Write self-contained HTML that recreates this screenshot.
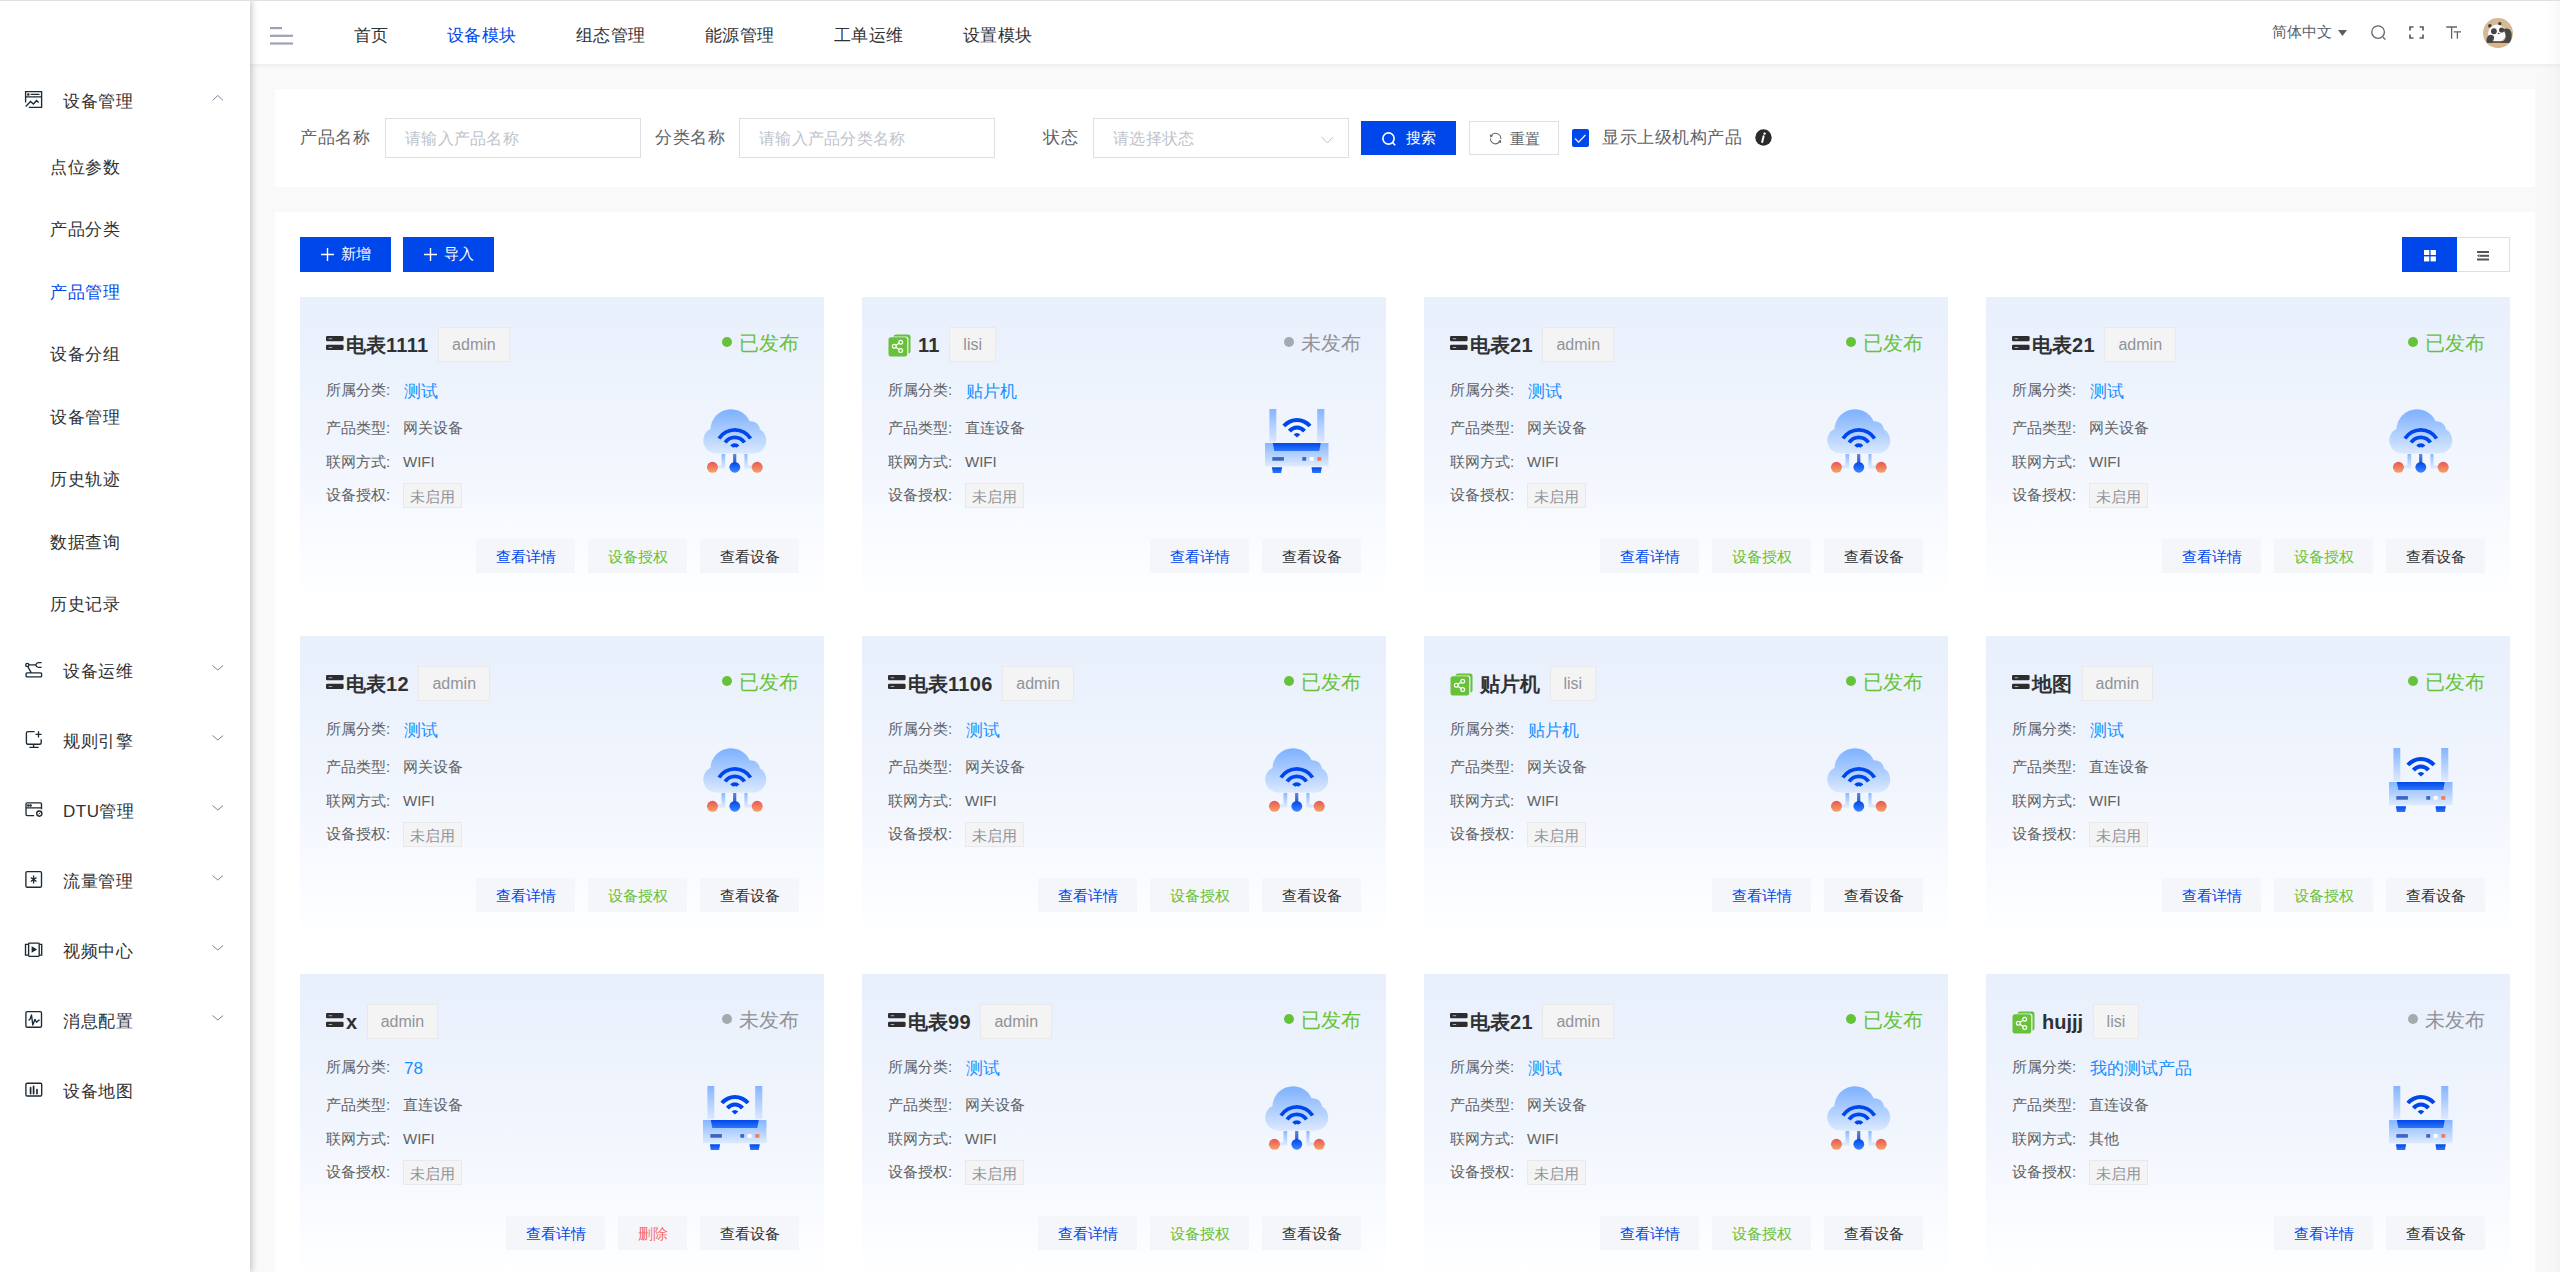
<!DOCTYPE html><html><head><meta charset="utf-8"><style>*{box-sizing:border-box}
html,body{margin:0;padding:0;width:2560px;height:1272px;overflow:hidden;background:#f9f9f9;font-family:"Liberation Sans",sans-serif;color:#303133}
div{white-space:nowrap}
.topline{position:absolute;left:0;top:0;width:2560px;height:1px;background:#dfe1de;z-index:20}
.side{position:absolute;left:0;top:0;width:250px;height:1272px;background:#fff;box-shadow:1px 0 7px rgba(20,30,50,.30);z-index:10}
.sic{position:absolute;left:25px}
.stop{position:absolute;left:63px;font-size:17px;letter-spacing:.5px;line-height:24px;color:#303133}
.ssub{position:absolute;left:50px;font-size:17px;letter-spacing:.5px;line-height:24px;color:#303133}
.ssub.act{color:#0047eb}
.chev{position:absolute;left:211.5px}
.header{position:absolute;left:250px;top:0;width:2310px;height:64px;background:#fff;box-shadow:0 1px 5px rgba(0,21,41,.07);z-index:5}
.nav{position:absolute;top:24px;font-size:17px;letter-spacing:.5px;line-height:24px;color:#303133}
.nav.act{color:#0047eb}
.panel{position:absolute;left:275px;width:2260px;background:#fff}
.lbl{position:absolute;top:126px;font-size:17px;letter-spacing:.5px;line-height:24px;color:#606266}
.inp{position:absolute;top:118px;width:256px;height:40px;border:1px solid #dcdfe6;background:#fff}
.ph{position:absolute;left:19px;top:8px;font-size:16px;letter-spacing:.25px;line-height:24px;color:#c0c4cc}
.btnp{position:absolute;background:#0047eb;color:#fff;font-size:15px;line-height:24px}
.card{position:absolute;width:524px;height:301px;background:linear-gradient(180deg,#e8f0fc 0%,#f1f5fd 50%,#fafcff 85%,#ffffff 100%)}
.ctitle{position:absolute;left:26px;top:30px;height:36px}
.cicon{display:inline-block;vertical-align:top}
.cicon.bars{margin-top:9px;width:20px}
.cicon.share{margin-top:7px;width:30px}
.tname{display:inline-block;vertical-align:top;font-size:20px;font-weight:bold;line-height:36px;color:#303133}
.ctag{display:inline-block;vertical-align:top;margin-left:9.5px;height:35px;padding:0 13px;background:#f4f4f5;border:1px solid #e9e9eb;color:#909399;font-size:16px;line-height:33px}
.status{position:absolute;right:25px;top:34px;height:24px}
.dot{position:absolute;left:-17px;top:6px;width:10px;height:10px;border-radius:50%}
.stt{font-size:20px;line-height:24px}
.lab{position:absolute;left:26px;font-size:15px;line-height:24px;color:#606266}
.val{position:absolute;left:104px;font-size:15px;line-height:24px;color:#606266}
.cat{position:absolute;left:104px;font-size:17px;line-height:24px;color:#1890ff}
.tag2{position:absolute;left:103px;top:186px;height:25px;padding:0 6px;background:#f4f4f5;border:1px solid #e9e9eb;color:#909399;font-size:15px;line-height:25px}
.cimg{position:absolute;left:403px;top:112px;width:64px;height:64px}
.cbtns{position:absolute;right:25px;top:242px;display:flex;gap:13px}
.cbtn{width:99px;height:34px;background:#f5f6fa;font-size:15px;line-height:35px;text-align:center}
</style></head><body>
<div class="topline"></div>
<div class="side"><svg style="position:absolute;left:20px;top:85px" width="30" height="30" viewBox="0 0 30 30" fill="none" stroke="#1c2a35" stroke-width="1.35"><path d="M5.6 17.5 V6.6 H21.6 V22.3 H8.8 M5.6 11.8 H21.6 M10.6 9.4 H19.5"/><circle cx="8.3" cy="9.4" r="0.6" fill="#1c2a35"/><path d="M5.7 21.5 L10.5 16.5 L13.4 19 L16.5 15.5 L18.6 17.6"/></svg><div class="stop" style="top:90px">设备管理</div><svg style="position:absolute;left:212px;top:94.5px" width="12" height="6" viewBox="0 0 12 6"><path d="M0.5 5.5 L5.8 0.5 L11.1 5.5" fill="none" stroke="#7d8092" stroke-width="1"/></svg><div class="ssub" style="top:156px">点位参数</div><div class="ssub" style="top:218px">产品分类</div><div class="ssub act" style="top:281px">产品管理</div><div class="ssub" style="top:343px">设备分组</div><div class="ssub" style="top:406px">设备管理</div><div class="ssub" style="top:468px">历史轨迹</div><div class="ssub" style="top:531px">数据查询</div><div class="ssub" style="top:593px">历史记录</div><svg style="position:absolute;left:20px;top:655px" width="30" height="30" viewBox="0 0 30 30" fill="none" stroke="#1c2a35" stroke-width="1.35"><circle cx="7.3" cy="9.9" r="1.6"/><path d="M8.9 9.9 H15.7 M15.7 9.9 Q16.6 7.6 18.4 7.6 H21.6 M15.7 9.9 Q16.6 12.3 18.4 12.3 H21.6 M7.8 11.5 L11.3 17.8"/><rect x="6.1" y="17.8" width="15.5" height="4" rx="0.9"/></svg><div class="stop" style="top:660px">设备运维</div><svg style="position:absolute;left:212px;top:664.5px" width="12" height="6" viewBox="0 0 12 6"><path d="M0.5 0.5 L5.8 5 L11.1 0.5" fill="none" stroke="#7d8092" stroke-width="1"/></svg><svg style="position:absolute;left:20px;top:725px" width="30" height="30" viewBox="0 0 30 30" fill="none" stroke="#1c2a35" stroke-width="1.35"><path d="M14.6 6.6 H7.9 Q6.4 6.6 6.4 8.1 V17.7 Q6.4 19.2 7.9 19.2 H19.7 Q21.2 19.2 21.2 17.7 V14.2 M13.6 19.2 V22.4 M9.4 22.4 H18.6 M18.5 6.2 V12.6 M15.4 9.4 H21.6"/></svg><div class="stop" style="top:730px">规则引擎</div><svg style="position:absolute;left:212px;top:734.5px" width="12" height="6" viewBox="0 0 12 6"><path d="M0.5 0.5 L5.8 5 L11.1 0.5" fill="none" stroke="#7d8092" stroke-width="1"/></svg><svg style="position:absolute;left:20px;top:795px" width="30" height="30" viewBox="0 0 30 30" fill="none" stroke="#1c2a35" stroke-width="1.35"><path d="M14.2 20.6 H7.3 Q6 20.6 6 19.3 V9.1 Q6 7.8 7.3 7.8 H20.2 Q21.5 7.8 21.5 9.1 V14.2 M6 12.9 H21.5"/><circle cx="8.3" cy="10.4" r="0.6" fill="#1c2a35"/><circle cx="10.6" cy="10.4" r="0.6" fill="#1c2a35"/><circle cx="19.3" cy="18.6" r="2.6"/><path d="M18.4 19.5 L20.2 17.7" stroke-width="1"/></svg><div class="stop" style="top:800px">DTU管理</div><svg style="position:absolute;left:212px;top:804.5px" width="12" height="6" viewBox="0 0 12 6"><path d="M0.5 0.5 L5.8 5 L11.1 0.5" fill="none" stroke="#7d8092" stroke-width="1"/></svg><svg style="position:absolute;left:20px;top:865px" width="30" height="30" viewBox="0 0 30 30" fill="none" stroke="#1c2a35" stroke-width="1.35"><rect x="5.9" y="6.6" width="15.6" height="15.6" rx="1.3"/><path d="M13.6 10.4 V18.6 M10.8 12.5 L16.5 16.5 M16.5 12.5 L10.8 16.5"/></svg><div class="stop" style="top:870px">流量管理</div><svg style="position:absolute;left:212px;top:874.5px" width="12" height="6" viewBox="0 0 12 6"><path d="M0.5 0.5 L5.8 5 L11.1 0.5" fill="none" stroke="#7d8092" stroke-width="1"/></svg><svg style="position:absolute;left:20px;top:935px" width="30" height="30" viewBox="0 0 30 30" fill="none" stroke="#1c2a35" stroke-width="1.35"><rect x="8.6" y="8.1" width="10.6" height="13.3" rx="0.8"/><path d="M8.6 9.4 H5.5 V20.1 H8.6 M19.2 9.4 H21.7 V20.1 H19.2"/><path d="M12.3 12.4 L15.8 14.45 L12.3 16.5 Z" fill="#1c2a35"/></svg><div class="stop" style="top:940px">视频中心</div><svg style="position:absolute;left:212px;top:944.5px" width="12" height="6" viewBox="0 0 12 6"><path d="M0.5 0.5 L5.8 5 L11.1 0.5" fill="none" stroke="#7d8092" stroke-width="1"/></svg><svg style="position:absolute;left:20px;top:1005px" width="30" height="30" viewBox="0 0 30 30" fill="none" stroke="#1c2a35" stroke-width="1.35"><rect x="5.9" y="6.6" width="15.6" height="15.6" rx="1.3"/><path d="M8.5 15.2 Q9.9 15 10.4 13.2 L11.5 10 L12.8 20 L14.9 14.4 L16.5 17.2 L18.9 15.1 H19.7" stroke-linejoin="round"/></svg><div class="stop" style="top:1010px">消息配置</div><svg style="position:absolute;left:212px;top:1014.5px" width="12" height="6" viewBox="0 0 12 6"><path d="M0.5 0.5 L5.8 5 L11.1 0.5" fill="none" stroke="#7d8092" stroke-width="1"/></svg><svg style="position:absolute;left:20px;top:1075px" width="30" height="30" viewBox="0 0 30 30" fill="none" stroke="#1c2a35" stroke-width="1.35"><rect x="5.9" y="8.2" width="15.8" height="12.8" rx="1.2"/><path d="M10.6 12.7 V18.6 M13.6 11.3 V18.6 M17 14.6 V18.6" stroke-width="1.7" stroke-linecap="round"/></svg><div class="stop" style="top:1080px">设备地图</div></div>
<div class="header">
<svg style="position:absolute;left:20px;top:27px" width="24" height="18" viewBox="0 0 24 18"><rect x="0" y="0" width="12" height="2.2" fill="#9ea1b7"/><rect x="0" y="7.7" width="23" height="2.2" fill="#9ea1b7"/><rect x="0" y="15.4" width="23" height="2.2" fill="#9ea1b7"/></svg>
<div class="nav" style="left:103.5px">首页</div>
<div class="nav act" style="left:196.5px">设备模块</div>
<div class="nav" style="left:325.5px">组态管理</div>
<div class="nav" style="left:454.5px">能源管理</div>
<div class="nav" style="left:583.5px">工单运维</div>
<div class="nav" style="left:712.5px">设置模块</div>
<div style="position:absolute;left:2022px;top:20px;font-size:15px;line-height:24px;color:#5a5e66">简体中文</div>
<svg style="position:absolute;left:2088px;top:30px" width="9" height="6" viewBox="0 0 9 6"><path d="M0 0 H9 L4.5 6 Z" fill="#5a5e66"/></svg>
<svg style="position:absolute;left:2121px;top:25px" width="17" height="17" viewBox="0 0 17 17"><circle cx="7.1" cy="7.1" r="6.3" fill="none" stroke="#5f6270" stroke-width="1.3"/><path d="M12 12.2 L14.4 14.6" stroke="#5f6270" stroke-width="1.3"/></svg>
<svg style="position:absolute;left:2159px;top:26px" width="15" height="13" viewBox="0 0 15 13" fill="none" stroke="#5a5e66" stroke-width="1.7"><path d="M1 4.5 V1 H4.5 M10.5 1 H14 V4.5 M14 8.5 V12 H10.5 M4.5 12 H1 V8.5"/></svg>
<svg style="position:absolute;left:2196px;top:26px" width="16" height="13" viewBox="0 0 16 13" fill="none" stroke="#5f6270" stroke-width="1.3"><path d="M0.2 1 H11 M5.6 1 V12.7 M7.8 5.8 H15 M11.4 5.8 V12.7"/></svg>
<div style="position:absolute;left:2233px;top:18px;width:30px;height:30px"><svg width="30" height="30" viewBox="0 0 30 30"><defs><clipPath id="pc"><circle cx="15" cy="15" r="15"/></clipPath></defs>
<g clip-path="url(#pc)"><rect width="30" height="30" fill="#d5ba96"/><rect y="24.6" width="30" height="6" fill="#ddb688"/>
<circle cx="6.9" cy="7.9" r="1.8" fill="#3c3c3c"/><circle cx="16.8" cy="5.7" r="1.7" fill="#3c3c3c"/>
<circle cx="13.9" cy="15.4" r="8.8" fill="#fdfdfd"/>
<ellipse cx="10.9" cy="13.3" rx="2.9" ry="3" fill="#434343"/><ellipse cx="18.6" cy="12" rx="2.6" ry="2.6" fill="#434343"/>
<ellipse cx="15.7" cy="15.4" rx="1" ry="0.55" fill="#333"/>
<rect x="4" y="23.2" width="23.5" height="1.6" fill="#474747"/>
<path d="M20.6 11.6 C23 9.6 27.6 10.4 28.5 15 C29.1 18.5 28.2 22 27.2 24.8 L17 24.8 C21 23.2 23.2 20.5 22.7 17.4 C22.4 15 20.9 13.6 20.6 11.6 Z" fill="#474747"/>
<path d="M3.5 24.8 C3 20 5 16.9 8 16.8 C10.6 16.7 11.6 19 10.9 21 C10.4 22.6 9.6 23.8 9 24.8 Z" fill="#474747"/>
</g></svg></div>
</div>
<div class="panel" style="top:89px;height:98px"></div>
<div class="lbl" style="left:300px">产品名称</div>
<div class="inp" style="left:385px"><div class="ph">请输入产品名称</div></div>
<div class="lbl" style="left:655px">分类名称</div>
<div class="inp" style="left:739px"><div class="ph">请输入产品分类名称</div></div>
<div class="lbl" style="left:1043px">状态</div>
<div class="inp" style="left:1093px"><div class="ph">请选择状态</div><svg style="position:absolute;left:227px;top:17px" width="13" height="8" viewBox="0 0 13 8"><path d="M0.5 0.8 L6.3 7 L12.1 0.8" fill="none" stroke="#c0c4cc" stroke-width="1"/></svg></div>
<div class="btnp" style="left:1361px;top:121px;width:95px;height:34px"><svg style="position:absolute;left:21px;top:11px" width="14" height="14" viewBox="0 0 14 14"><circle cx="6.5" cy="6.5" r="5.6" fill="none" stroke="#fff" stroke-width="1.6"/><path d="M10.6 10.6 L13.2 13.2" stroke="#fff" stroke-width="1.6"/></svg><span style="position:absolute;left:45px;top:5px">搜索</span></div>
<div style="position:absolute;left:1469px;top:121px;width:90px;height:34px;border:1px solid #dcdfe6;background:#fff;font-size:15px;line-height:24px;color:#606266"><svg style="position:absolute;left:19px;top:10px" width="13" height="13" viewBox="0 0 14 14"><path d="M2.25 4.3 A5.6 5.6 0 0 1 12.68 7.6 M1.5 7.1 A5.6 5.6 0 0 0 11.39 10.7" fill="none" stroke="#606266" stroke-width="1.1"/><path d="M0.9 2.4 L4.4 4.4 L1.4 6 Z M13.1 12 L9.7 9.9 L12.7 8.4 Z" fill="#606266"/></svg><span style="position:absolute;left:40px;top:5px">重置</span></div>
<div style="position:absolute;left:1572px;top:129px;width:17px;height:18px;border-radius:2px;background:#0047eb"><svg width="17" height="18" viewBox="0 0 17 18"><path d="M3.1 9.4 L6.6 13.2 L13.4 5.9" fill="none" stroke="#dfe6ff" stroke-width="1.5"/></svg></div>
<div style="position:absolute;left:1602px;top:126px;font-size:17px;letter-spacing:.5px;line-height:24px;color:#606266">显示上级机构产品</div>
<svg style="position:absolute;left:1755px;top:129px" width="17" height="17" viewBox="0 0 17 17"><circle cx="8.5" cy="8.5" r="8.2" fill="#2b2b2b"/><circle cx="9.6" cy="4.6" r="1.2" fill="#fff"/><path d="M8.6 7.2 L7.2 13" stroke="#fff" stroke-width="2" stroke-linecap="round"/></svg>
<div class="panel" style="top:212px;height:1100px"></div>
<div class="btnp" style="left:300px;top:237px;width:91px;height:35px"><svg width="13" height="13" viewBox="0 0 13 13" style="position:absolute;left:21px;top:10.8px"><path d="M6.5 0 V13 M0 6.5 H13" stroke="#fff" stroke-width="1.4"/></svg><span style="position:absolute;left:41px;top:5px">新增</span></div>
<div class="btnp" style="left:403px;top:237px;width:91px;height:35px"><svg width="13" height="13" viewBox="0 0 13 13" style="position:absolute;left:21px;top:10.8px"><path d="M6.5 0 V13 M0 6.5 H13" stroke="#fff" stroke-width="1.4"/></svg><span style="position:absolute;left:41px;top:5px">导入</span></div>
<div style="position:absolute;left:2402px;top:237px;width:55px;height:35px;background:#0047eb"><svg style="position:absolute;left:21.5px;top:12.7px" width="13" height="12" viewBox="0 0 13 12" fill="#fff"><rect x="0" y="0" width="5.3" height="5" /><rect x="6.6" y="0" width="5.3" height="5"/><rect x="0" y="6.4" width="5.3" height="5"/><rect x="6.6" y="6.4" width="5.3" height="5"/></svg></div>
<div style="position:absolute;left:2457px;top:237px;width:53px;height:35px;border:1px solid #dcdfe6;border-left:none;background:#fff"><svg style="position:absolute;left:20px;top:13px" width="12" height="10" viewBox="0 0 12 10" fill="#555"><rect x="0" y="0" width="12" height="2"/><rect x="3" y="3.8" width="9" height="2"/><path d="M0 4.8 L2.5 3 V6.6 Z"/><rect x="0" y="7.5" width="12" height="2"/></svg></div>
<div class="card" style="left:300px;top:297px">
<div class="ctitle"><span class="cicon bars"><svg width="18" height="14" viewBox="0 0 18 14"><rect x="0" y="0" width="17.6" height="5.2" rx="1.3" fill="#2d2d2f"/><rect x="0" y="8.8" width="17.6" height="5.2" rx="1.3" fill="#2d2d2f"/><rect x="2.7" y="2.3" width="3.5" height="0.9" fill="#bbb"/><rect x="2.7" y="11.1" width="3.5" height="0.9" fill="#bbb"/></svg></span><span class="tname">电表<span style="letter-spacing:.35px">1111</span></span><span class="ctag">admin</span></div>
<div class="status"><span class="dot" style="background:#67c23a"></span><span class="stt" style="color:#67c23a">已发布</span></div>
<div class="lab" style="top:81px">所属分类:</div><div class="cat" style="top:83px">测试</div>
<div class="lab" style="top:119px">产品类型:</div><div class="val" style="top:119px;left:103px">网关设备</div>
<div class="lab" style="top:153px">联网方式:</div><div class="val" style="top:153px;left:103px">WIFI</div>
<div class="lab" style="top:186px">设备授权:</div><div class="tag2">未启用</div>
<div class="cimg"><svg width="64" height="64" viewBox="0 0 64 64"><defs>
<linearGradient id="cg0" gradientUnits="userSpaceOnUse" x1="0" y1="0" x2="0" y2="45"><stop offset="0" stop-color="#7cb0ff"/><stop offset="1" stop-color="#dbe9fe"/></linearGradient>
<linearGradient id="og0" x1="0" y1="0" x2="0" y2="1"><stop offset="0" stop-color="#ea5455"/><stop offset="1" stop-color="#f5a466"/></linearGradient>
<linearGradient id="bg0" x1="0" y1="0" x2="0" y2="1"><stop offset="0" stop-color="#0047eb"/><stop offset="1" stop-color="#3d88ff"/></linearGradient>
<linearGradient id="lg0" gradientUnits="userSpaceOnUse" x1="0" y1="45" x2="0" y2="60"><stop offset="0" stop-color="#8ab8ff"/><stop offset="1" stop-color="#e4efff"/></linearGradient>
<linearGradient id="dg0" gradientUnits="userSpaceOnUse" x1="0" y1="45" x2="0" y2="54"><stop offset="0" stop-color="#5f86d6"/><stop offset="1" stop-color="#2f5fc4"/></linearGradient>
</defs>
<g fill="url(#cg0)"><circle cx="28" cy="20.9" r="20.6"/><circle cx="48" cy="21" r="8.8"/><circle cx="13.3" cy="31.5" r="13"/><circle cx="50.2" cy="31.5" r="13"/><rect x="13.3" y="20" width="37" height="24.5"/></g>
<path d="M14.44 28.53 A20.7 20.7 0 0 1 49.16 28.53 L46.06 30.54 A17 17 0 0 0 17.54 30.54 ZM20.56 32.50 A13.4 13.4 0 0 1 43.04 32.50 L39.85 34.57 A9.6 9.6 0 0 0 23.75 34.57 ZM27.21 36.59 A5.6 5.6 0 0 1 36.39 36.59 L33.27 38.77 A1.8 1.8 0 0 0 30.33 38.77 Z" fill="#0047eb"/>
<path d="M18.5 45 H22.2 V59.7 H14.5 V56.6 H18.5 Z" fill="url(#lg0)"/>
<path d="M41.4 45 H44.5 V56.6 H49 V59.7 H41.4 Z" fill="url(#lg0)"/>
<rect x="30.1" y="45" width="3.2" height="9" fill="url(#dg0)"/>
<circle cx="9.45" cy="58.3" r="5.5" fill="url(#og0)"/><circle cx="54.2" cy="58.3" r="5.5" fill="url(#og0)"/>
<circle cx="31.8" cy="58.3" r="5.4" fill="url(#bg0)"/>
</svg></div>
<div class="cbtns"><div class="cbtn" style="color:#0047eb">查看详情</div><div class="cbtn" style="color:#67c23a">设备授权</div><div class="cbtn" style="color:#303133">查看设备</div></div>
</div><div class="card" style="left:862px;top:297px">
<div class="ctitle"><span class="cicon share"><svg width="23" height="23" viewBox="0 0 23 23"><rect x="5.5" y="0.5" width="17" height="19" rx="2.5" fill="#67c23a"/><rect x="4" y="2.5" width="16.5" height="19" rx="2.5" fill="#e9effb"/><rect x="0.5" y="3.2" width="18.7" height="19.3" rx="2.5" fill="#67c23a"/>
<g fill="none" stroke="#fff" stroke-width="1.2"><circle cx="12.7" cy="8.2" r="1.9"/><circle cx="6.3" cy="12.2" r="1.9"/><circle cx="12.7" cy="16.6" r="1.9"/><path d="M11.1 9.2 L7.9 11.2 M7.9 13.2 L11.1 15.6"/></g></svg></span><span class="tname"><span style="letter-spacing:.35px">11</span></span><span class="ctag">lisi</span></div>
<div class="status"><span class="dot" style="background:#a6a9ad"></span><span class="stt" style="color:#909399">未发布</span></div>
<div class="lab" style="top:81px">所属分类:</div><div class="cat" style="top:83px">贴片机</div>
<div class="lab" style="top:119px">产品类型:</div><div class="val" style="top:119px;left:103px">直连设备</div>
<div class="lab" style="top:153px">联网方式:</div><div class="val" style="top:153px;left:103px">WIFI</div>
<div class="lab" style="top:186px">设备授权:</div><div class="tag2">未启用</div>
<div class="cimg"><svg width="64" height="64" viewBox="0 0 64 64"><defs>
<linearGradient id="ra1" x1="0" y1="0" x2="0" y2="1"><stop offset="0" stop-color="#84b5ff"/><stop offset="1" stop-color="#dde9ff"/></linearGradient>
<linearGradient id="rb1" x1="0" y1="0" x2="0" y2="1"><stop offset="0" stop-color="#86b6ff"/><stop offset="1" stop-color="#deebff"/></linearGradient>
<linearGradient id="rc1" x1="0" y1="0" x2="0" y2="1"><stop offset="0" stop-color="#0047eb"/><stop offset="1" stop-color="#2f78f7"/></linearGradient>
</defs>
<rect x="4.4" y="0" width="6.9" height="33" fill="url(#ra1)"/><rect x="52.2" y="0" width="7.1" height="33" fill="url(#ra1)"/>
<path d="M17.38 15.74 A19.3 19.3 0 0 1 46.52 15.74 L43.50 18.36 A15.3 15.3 0 0 0 20.40 18.36 ZM22.91 20.82 A11.8 11.8 0 0 1 40.99 20.82 L37.93 23.39 A7.8 7.8 0 0 0 25.97 23.39 ZM28.58 25.57 A4.4 4.4 0 0 1 35.32 25.57 L31.95 28.40 Z" fill="#0047eb"/>
<rect x="0" y="34" width="63.5" height="23.3" fill="url(#rb1)"/>
<path d="M7.8 34 H55.7 L54.3 42.1 H9.3 Z" fill="url(#rc1)"/>
<rect x="7.3" y="48.1" width="11.6" height="3.6" fill="#3d64c0"/>
<rect x="37.3" y="48.1" width="3.9" height="3.6" fill="#3d64c0"/>
<rect x="44.7" y="48.1" width="3.9" height="3.6" fill="#ffffff"/>
<rect x="52.3" y="48.1" width="4" height="3.6" fill="#f07b55"/>
<path d="M6.9 58.2 H17.1 L16.1 64 H7.8 Z" fill="url(#rc1)"/>
<path d="M46.5 58.2 H56.8 L55.8 64 H47.3 Z" fill="url(#rc1)"/>
</svg></div>
<div class="cbtns"><div class="cbtn" style="color:#0047eb">查看详情</div><div class="cbtn" style="color:#303133">查看设备</div></div>
</div><div class="card" style="left:1424px;top:297px">
<div class="ctitle"><span class="cicon bars"><svg width="18" height="14" viewBox="0 0 18 14"><rect x="0" y="0" width="17.6" height="5.2" rx="1.3" fill="#2d2d2f"/><rect x="0" y="8.8" width="17.6" height="5.2" rx="1.3" fill="#2d2d2f"/><rect x="2.7" y="2.3" width="3.5" height="0.9" fill="#bbb"/><rect x="2.7" y="11.1" width="3.5" height="0.9" fill="#bbb"/></svg></span><span class="tname">电表<span style="letter-spacing:.35px">21</span></span><span class="ctag">admin</span></div>
<div class="status"><span class="dot" style="background:#67c23a"></span><span class="stt" style="color:#67c23a">已发布</span></div>
<div class="lab" style="top:81px">所属分类:</div><div class="cat" style="top:83px">测试</div>
<div class="lab" style="top:119px">产品类型:</div><div class="val" style="top:119px;left:103px">网关设备</div>
<div class="lab" style="top:153px">联网方式:</div><div class="val" style="top:153px;left:103px">WIFI</div>
<div class="lab" style="top:186px">设备授权:</div><div class="tag2">未启用</div>
<div class="cimg"><svg width="64" height="64" viewBox="0 0 64 64"><defs>
<linearGradient id="cg2" gradientUnits="userSpaceOnUse" x1="0" y1="0" x2="0" y2="45"><stop offset="0" stop-color="#7cb0ff"/><stop offset="1" stop-color="#dbe9fe"/></linearGradient>
<linearGradient id="og2" x1="0" y1="0" x2="0" y2="1"><stop offset="0" stop-color="#ea5455"/><stop offset="1" stop-color="#f5a466"/></linearGradient>
<linearGradient id="bg2" x1="0" y1="0" x2="0" y2="1"><stop offset="0" stop-color="#0047eb"/><stop offset="1" stop-color="#3d88ff"/></linearGradient>
<linearGradient id="lg2" gradientUnits="userSpaceOnUse" x1="0" y1="45" x2="0" y2="60"><stop offset="0" stop-color="#8ab8ff"/><stop offset="1" stop-color="#e4efff"/></linearGradient>
<linearGradient id="dg2" gradientUnits="userSpaceOnUse" x1="0" y1="45" x2="0" y2="54"><stop offset="0" stop-color="#5f86d6"/><stop offset="1" stop-color="#2f5fc4"/></linearGradient>
</defs>
<g fill="url(#cg2)"><circle cx="28" cy="20.9" r="20.6"/><circle cx="48" cy="21" r="8.8"/><circle cx="13.3" cy="31.5" r="13"/><circle cx="50.2" cy="31.5" r="13"/><rect x="13.3" y="20" width="37" height="24.5"/></g>
<path d="M14.44 28.53 A20.7 20.7 0 0 1 49.16 28.53 L46.06 30.54 A17 17 0 0 0 17.54 30.54 ZM20.56 32.50 A13.4 13.4 0 0 1 43.04 32.50 L39.85 34.57 A9.6 9.6 0 0 0 23.75 34.57 ZM27.21 36.59 A5.6 5.6 0 0 1 36.39 36.59 L33.27 38.77 A1.8 1.8 0 0 0 30.33 38.77 Z" fill="#0047eb"/>
<path d="M18.5 45 H22.2 V59.7 H14.5 V56.6 H18.5 Z" fill="url(#lg2)"/>
<path d="M41.4 45 H44.5 V56.6 H49 V59.7 H41.4 Z" fill="url(#lg2)"/>
<rect x="30.1" y="45" width="3.2" height="9" fill="url(#dg2)"/>
<circle cx="9.45" cy="58.3" r="5.5" fill="url(#og2)"/><circle cx="54.2" cy="58.3" r="5.5" fill="url(#og2)"/>
<circle cx="31.8" cy="58.3" r="5.4" fill="url(#bg2)"/>
</svg></div>
<div class="cbtns"><div class="cbtn" style="color:#0047eb">查看详情</div><div class="cbtn" style="color:#67c23a">设备授权</div><div class="cbtn" style="color:#303133">查看设备</div></div>
</div><div class="card" style="left:1986px;top:297px">
<div class="ctitle"><span class="cicon bars"><svg width="18" height="14" viewBox="0 0 18 14"><rect x="0" y="0" width="17.6" height="5.2" rx="1.3" fill="#2d2d2f"/><rect x="0" y="8.8" width="17.6" height="5.2" rx="1.3" fill="#2d2d2f"/><rect x="2.7" y="2.3" width="3.5" height="0.9" fill="#bbb"/><rect x="2.7" y="11.1" width="3.5" height="0.9" fill="#bbb"/></svg></span><span class="tname">电表<span style="letter-spacing:.35px">21</span></span><span class="ctag">admin</span></div>
<div class="status"><span class="dot" style="background:#67c23a"></span><span class="stt" style="color:#67c23a">已发布</span></div>
<div class="lab" style="top:81px">所属分类:</div><div class="cat" style="top:83px">测试</div>
<div class="lab" style="top:119px">产品类型:</div><div class="val" style="top:119px;left:103px">网关设备</div>
<div class="lab" style="top:153px">联网方式:</div><div class="val" style="top:153px;left:103px">WIFI</div>
<div class="lab" style="top:186px">设备授权:</div><div class="tag2">未启用</div>
<div class="cimg"><svg width="64" height="64" viewBox="0 0 64 64"><defs>
<linearGradient id="cg3" gradientUnits="userSpaceOnUse" x1="0" y1="0" x2="0" y2="45"><stop offset="0" stop-color="#7cb0ff"/><stop offset="1" stop-color="#dbe9fe"/></linearGradient>
<linearGradient id="og3" x1="0" y1="0" x2="0" y2="1"><stop offset="0" stop-color="#ea5455"/><stop offset="1" stop-color="#f5a466"/></linearGradient>
<linearGradient id="bg3" x1="0" y1="0" x2="0" y2="1"><stop offset="0" stop-color="#0047eb"/><stop offset="1" stop-color="#3d88ff"/></linearGradient>
<linearGradient id="lg3" gradientUnits="userSpaceOnUse" x1="0" y1="45" x2="0" y2="60"><stop offset="0" stop-color="#8ab8ff"/><stop offset="1" stop-color="#e4efff"/></linearGradient>
<linearGradient id="dg3" gradientUnits="userSpaceOnUse" x1="0" y1="45" x2="0" y2="54"><stop offset="0" stop-color="#5f86d6"/><stop offset="1" stop-color="#2f5fc4"/></linearGradient>
</defs>
<g fill="url(#cg3)"><circle cx="28" cy="20.9" r="20.6"/><circle cx="48" cy="21" r="8.8"/><circle cx="13.3" cy="31.5" r="13"/><circle cx="50.2" cy="31.5" r="13"/><rect x="13.3" y="20" width="37" height="24.5"/></g>
<path d="M14.44 28.53 A20.7 20.7 0 0 1 49.16 28.53 L46.06 30.54 A17 17 0 0 0 17.54 30.54 ZM20.56 32.50 A13.4 13.4 0 0 1 43.04 32.50 L39.85 34.57 A9.6 9.6 0 0 0 23.75 34.57 ZM27.21 36.59 A5.6 5.6 0 0 1 36.39 36.59 L33.27 38.77 A1.8 1.8 0 0 0 30.33 38.77 Z" fill="#0047eb"/>
<path d="M18.5 45 H22.2 V59.7 H14.5 V56.6 H18.5 Z" fill="url(#lg3)"/>
<path d="M41.4 45 H44.5 V56.6 H49 V59.7 H41.4 Z" fill="url(#lg3)"/>
<rect x="30.1" y="45" width="3.2" height="9" fill="url(#dg3)"/>
<circle cx="9.45" cy="58.3" r="5.5" fill="url(#og3)"/><circle cx="54.2" cy="58.3" r="5.5" fill="url(#og3)"/>
<circle cx="31.8" cy="58.3" r="5.4" fill="url(#bg3)"/>
</svg></div>
<div class="cbtns"><div class="cbtn" style="color:#0047eb">查看详情</div><div class="cbtn" style="color:#67c23a">设备授权</div><div class="cbtn" style="color:#303133">查看设备</div></div>
</div><div class="card" style="left:300px;top:635.5px">
<div class="ctitle"><span class="cicon bars"><svg width="18" height="14" viewBox="0 0 18 14"><rect x="0" y="0" width="17.6" height="5.2" rx="1.3" fill="#2d2d2f"/><rect x="0" y="8.8" width="17.6" height="5.2" rx="1.3" fill="#2d2d2f"/><rect x="2.7" y="2.3" width="3.5" height="0.9" fill="#bbb"/><rect x="2.7" y="11.1" width="3.5" height="0.9" fill="#bbb"/></svg></span><span class="tname">电表<span style="letter-spacing:.35px">12</span></span><span class="ctag">admin</span></div>
<div class="status"><span class="dot" style="background:#67c23a"></span><span class="stt" style="color:#67c23a">已发布</span></div>
<div class="lab" style="top:81px">所属分类:</div><div class="cat" style="top:83px">测试</div>
<div class="lab" style="top:119px">产品类型:</div><div class="val" style="top:119px;left:103px">网关设备</div>
<div class="lab" style="top:153px">联网方式:</div><div class="val" style="top:153px;left:103px">WIFI</div>
<div class="lab" style="top:186px">设备授权:</div><div class="tag2">未启用</div>
<div class="cimg"><svg width="64" height="64" viewBox="0 0 64 64"><defs>
<linearGradient id="cg4" gradientUnits="userSpaceOnUse" x1="0" y1="0" x2="0" y2="45"><stop offset="0" stop-color="#7cb0ff"/><stop offset="1" stop-color="#dbe9fe"/></linearGradient>
<linearGradient id="og4" x1="0" y1="0" x2="0" y2="1"><stop offset="0" stop-color="#ea5455"/><stop offset="1" stop-color="#f5a466"/></linearGradient>
<linearGradient id="bg4" x1="0" y1="0" x2="0" y2="1"><stop offset="0" stop-color="#0047eb"/><stop offset="1" stop-color="#3d88ff"/></linearGradient>
<linearGradient id="lg4" gradientUnits="userSpaceOnUse" x1="0" y1="45" x2="0" y2="60"><stop offset="0" stop-color="#8ab8ff"/><stop offset="1" stop-color="#e4efff"/></linearGradient>
<linearGradient id="dg4" gradientUnits="userSpaceOnUse" x1="0" y1="45" x2="0" y2="54"><stop offset="0" stop-color="#5f86d6"/><stop offset="1" stop-color="#2f5fc4"/></linearGradient>
</defs>
<g fill="url(#cg4)"><circle cx="28" cy="20.9" r="20.6"/><circle cx="48" cy="21" r="8.8"/><circle cx="13.3" cy="31.5" r="13"/><circle cx="50.2" cy="31.5" r="13"/><rect x="13.3" y="20" width="37" height="24.5"/></g>
<path d="M14.44 28.53 A20.7 20.7 0 0 1 49.16 28.53 L46.06 30.54 A17 17 0 0 0 17.54 30.54 ZM20.56 32.50 A13.4 13.4 0 0 1 43.04 32.50 L39.85 34.57 A9.6 9.6 0 0 0 23.75 34.57 ZM27.21 36.59 A5.6 5.6 0 0 1 36.39 36.59 L33.27 38.77 A1.8 1.8 0 0 0 30.33 38.77 Z" fill="#0047eb"/>
<path d="M18.5 45 H22.2 V59.7 H14.5 V56.6 H18.5 Z" fill="url(#lg4)"/>
<path d="M41.4 45 H44.5 V56.6 H49 V59.7 H41.4 Z" fill="url(#lg4)"/>
<rect x="30.1" y="45" width="3.2" height="9" fill="url(#dg4)"/>
<circle cx="9.45" cy="58.3" r="5.5" fill="url(#og4)"/><circle cx="54.2" cy="58.3" r="5.5" fill="url(#og4)"/>
<circle cx="31.8" cy="58.3" r="5.4" fill="url(#bg4)"/>
</svg></div>
<div class="cbtns"><div class="cbtn" style="color:#0047eb">查看详情</div><div class="cbtn" style="color:#67c23a">设备授权</div><div class="cbtn" style="color:#303133">查看设备</div></div>
</div><div class="card" style="left:862px;top:635.5px">
<div class="ctitle"><span class="cicon bars"><svg width="18" height="14" viewBox="0 0 18 14"><rect x="0" y="0" width="17.6" height="5.2" rx="1.3" fill="#2d2d2f"/><rect x="0" y="8.8" width="17.6" height="5.2" rx="1.3" fill="#2d2d2f"/><rect x="2.7" y="2.3" width="3.5" height="0.9" fill="#bbb"/><rect x="2.7" y="11.1" width="3.5" height="0.9" fill="#bbb"/></svg></span><span class="tname">电表<span style="letter-spacing:.35px">1106</span></span><span class="ctag">admin</span></div>
<div class="status"><span class="dot" style="background:#67c23a"></span><span class="stt" style="color:#67c23a">已发布</span></div>
<div class="lab" style="top:81px">所属分类:</div><div class="cat" style="top:83px">测试</div>
<div class="lab" style="top:119px">产品类型:</div><div class="val" style="top:119px;left:103px">网关设备</div>
<div class="lab" style="top:153px">联网方式:</div><div class="val" style="top:153px;left:103px">WIFI</div>
<div class="lab" style="top:186px">设备授权:</div><div class="tag2">未启用</div>
<div class="cimg"><svg width="64" height="64" viewBox="0 0 64 64"><defs>
<linearGradient id="cg5" gradientUnits="userSpaceOnUse" x1="0" y1="0" x2="0" y2="45"><stop offset="0" stop-color="#7cb0ff"/><stop offset="1" stop-color="#dbe9fe"/></linearGradient>
<linearGradient id="og5" x1="0" y1="0" x2="0" y2="1"><stop offset="0" stop-color="#ea5455"/><stop offset="1" stop-color="#f5a466"/></linearGradient>
<linearGradient id="bg5" x1="0" y1="0" x2="0" y2="1"><stop offset="0" stop-color="#0047eb"/><stop offset="1" stop-color="#3d88ff"/></linearGradient>
<linearGradient id="lg5" gradientUnits="userSpaceOnUse" x1="0" y1="45" x2="0" y2="60"><stop offset="0" stop-color="#8ab8ff"/><stop offset="1" stop-color="#e4efff"/></linearGradient>
<linearGradient id="dg5" gradientUnits="userSpaceOnUse" x1="0" y1="45" x2="0" y2="54"><stop offset="0" stop-color="#5f86d6"/><stop offset="1" stop-color="#2f5fc4"/></linearGradient>
</defs>
<g fill="url(#cg5)"><circle cx="28" cy="20.9" r="20.6"/><circle cx="48" cy="21" r="8.8"/><circle cx="13.3" cy="31.5" r="13"/><circle cx="50.2" cy="31.5" r="13"/><rect x="13.3" y="20" width="37" height="24.5"/></g>
<path d="M14.44 28.53 A20.7 20.7 0 0 1 49.16 28.53 L46.06 30.54 A17 17 0 0 0 17.54 30.54 ZM20.56 32.50 A13.4 13.4 0 0 1 43.04 32.50 L39.85 34.57 A9.6 9.6 0 0 0 23.75 34.57 ZM27.21 36.59 A5.6 5.6 0 0 1 36.39 36.59 L33.27 38.77 A1.8 1.8 0 0 0 30.33 38.77 Z" fill="#0047eb"/>
<path d="M18.5 45 H22.2 V59.7 H14.5 V56.6 H18.5 Z" fill="url(#lg5)"/>
<path d="M41.4 45 H44.5 V56.6 H49 V59.7 H41.4 Z" fill="url(#lg5)"/>
<rect x="30.1" y="45" width="3.2" height="9" fill="url(#dg5)"/>
<circle cx="9.45" cy="58.3" r="5.5" fill="url(#og5)"/><circle cx="54.2" cy="58.3" r="5.5" fill="url(#og5)"/>
<circle cx="31.8" cy="58.3" r="5.4" fill="url(#bg5)"/>
</svg></div>
<div class="cbtns"><div class="cbtn" style="color:#0047eb">查看详情</div><div class="cbtn" style="color:#67c23a">设备授权</div><div class="cbtn" style="color:#303133">查看设备</div></div>
</div><div class="card" style="left:1424px;top:635.5px">
<div class="ctitle"><span class="cicon share"><svg width="23" height="23" viewBox="0 0 23 23"><rect x="5.5" y="0.5" width="17" height="19" rx="2.5" fill="#67c23a"/><rect x="4" y="2.5" width="16.5" height="19" rx="2.5" fill="#e9effb"/><rect x="0.5" y="3.2" width="18.7" height="19.3" rx="2.5" fill="#67c23a"/>
<g fill="none" stroke="#fff" stroke-width="1.2"><circle cx="12.7" cy="8.2" r="1.9"/><circle cx="6.3" cy="12.2" r="1.9"/><circle cx="12.7" cy="16.6" r="1.9"/><path d="M11.1 9.2 L7.9 11.2 M7.9 13.2 L11.1 15.6"/></g></svg></span><span class="tname">贴片机</span><span class="ctag">lisi</span></div>
<div class="status"><span class="dot" style="background:#67c23a"></span><span class="stt" style="color:#67c23a">已发布</span></div>
<div class="lab" style="top:81px">所属分类:</div><div class="cat" style="top:83px">贴片机</div>
<div class="lab" style="top:119px">产品类型:</div><div class="val" style="top:119px;left:103px">网关设备</div>
<div class="lab" style="top:153px">联网方式:</div><div class="val" style="top:153px;left:103px">WIFI</div>
<div class="lab" style="top:186px">设备授权:</div><div class="tag2">未启用</div>
<div class="cimg"><svg width="64" height="64" viewBox="0 0 64 64"><defs>
<linearGradient id="cg6" gradientUnits="userSpaceOnUse" x1="0" y1="0" x2="0" y2="45"><stop offset="0" stop-color="#7cb0ff"/><stop offset="1" stop-color="#dbe9fe"/></linearGradient>
<linearGradient id="og6" x1="0" y1="0" x2="0" y2="1"><stop offset="0" stop-color="#ea5455"/><stop offset="1" stop-color="#f5a466"/></linearGradient>
<linearGradient id="bg6" x1="0" y1="0" x2="0" y2="1"><stop offset="0" stop-color="#0047eb"/><stop offset="1" stop-color="#3d88ff"/></linearGradient>
<linearGradient id="lg6" gradientUnits="userSpaceOnUse" x1="0" y1="45" x2="0" y2="60"><stop offset="0" stop-color="#8ab8ff"/><stop offset="1" stop-color="#e4efff"/></linearGradient>
<linearGradient id="dg6" gradientUnits="userSpaceOnUse" x1="0" y1="45" x2="0" y2="54"><stop offset="0" stop-color="#5f86d6"/><stop offset="1" stop-color="#2f5fc4"/></linearGradient>
</defs>
<g fill="url(#cg6)"><circle cx="28" cy="20.9" r="20.6"/><circle cx="48" cy="21" r="8.8"/><circle cx="13.3" cy="31.5" r="13"/><circle cx="50.2" cy="31.5" r="13"/><rect x="13.3" y="20" width="37" height="24.5"/></g>
<path d="M14.44 28.53 A20.7 20.7 0 0 1 49.16 28.53 L46.06 30.54 A17 17 0 0 0 17.54 30.54 ZM20.56 32.50 A13.4 13.4 0 0 1 43.04 32.50 L39.85 34.57 A9.6 9.6 0 0 0 23.75 34.57 ZM27.21 36.59 A5.6 5.6 0 0 1 36.39 36.59 L33.27 38.77 A1.8 1.8 0 0 0 30.33 38.77 Z" fill="#0047eb"/>
<path d="M18.5 45 H22.2 V59.7 H14.5 V56.6 H18.5 Z" fill="url(#lg6)"/>
<path d="M41.4 45 H44.5 V56.6 H49 V59.7 H41.4 Z" fill="url(#lg6)"/>
<rect x="30.1" y="45" width="3.2" height="9" fill="url(#dg6)"/>
<circle cx="9.45" cy="58.3" r="5.5" fill="url(#og6)"/><circle cx="54.2" cy="58.3" r="5.5" fill="url(#og6)"/>
<circle cx="31.8" cy="58.3" r="5.4" fill="url(#bg6)"/>
</svg></div>
<div class="cbtns"><div class="cbtn" style="color:#0047eb">查看详情</div><div class="cbtn" style="color:#303133">查看设备</div></div>
</div><div class="card" style="left:1986px;top:635.5px">
<div class="ctitle"><span class="cicon bars"><svg width="18" height="14" viewBox="0 0 18 14"><rect x="0" y="0" width="17.6" height="5.2" rx="1.3" fill="#2d2d2f"/><rect x="0" y="8.8" width="17.6" height="5.2" rx="1.3" fill="#2d2d2f"/><rect x="2.7" y="2.3" width="3.5" height="0.9" fill="#bbb"/><rect x="2.7" y="11.1" width="3.5" height="0.9" fill="#bbb"/></svg></span><span class="tname">地图</span><span class="ctag">admin</span></div>
<div class="status"><span class="dot" style="background:#67c23a"></span><span class="stt" style="color:#67c23a">已发布</span></div>
<div class="lab" style="top:81px">所属分类:</div><div class="cat" style="top:83px">测试</div>
<div class="lab" style="top:119px">产品类型:</div><div class="val" style="top:119px;left:103px">直连设备</div>
<div class="lab" style="top:153px">联网方式:</div><div class="val" style="top:153px;left:103px">WIFI</div>
<div class="lab" style="top:186px">设备授权:</div><div class="tag2">未启用</div>
<div class="cimg"><svg width="64" height="64" viewBox="0 0 64 64"><defs>
<linearGradient id="ra7" x1="0" y1="0" x2="0" y2="1"><stop offset="0" stop-color="#84b5ff"/><stop offset="1" stop-color="#dde9ff"/></linearGradient>
<linearGradient id="rb7" x1="0" y1="0" x2="0" y2="1"><stop offset="0" stop-color="#86b6ff"/><stop offset="1" stop-color="#deebff"/></linearGradient>
<linearGradient id="rc7" x1="0" y1="0" x2="0" y2="1"><stop offset="0" stop-color="#0047eb"/><stop offset="1" stop-color="#2f78f7"/></linearGradient>
</defs>
<rect x="4.4" y="0" width="6.9" height="33" fill="url(#ra7)"/><rect x="52.2" y="0" width="7.1" height="33" fill="url(#ra7)"/>
<path d="M17.38 15.74 A19.3 19.3 0 0 1 46.52 15.74 L43.50 18.36 A15.3 15.3 0 0 0 20.40 18.36 ZM22.91 20.82 A11.8 11.8 0 0 1 40.99 20.82 L37.93 23.39 A7.8 7.8 0 0 0 25.97 23.39 ZM28.58 25.57 A4.4 4.4 0 0 1 35.32 25.57 L31.95 28.40 Z" fill="#0047eb"/>
<rect x="0" y="34" width="63.5" height="23.3" fill="url(#rb7)"/>
<path d="M7.8 34 H55.7 L54.3 42.1 H9.3 Z" fill="url(#rc7)"/>
<rect x="7.3" y="48.1" width="11.6" height="3.6" fill="#3d64c0"/>
<rect x="37.3" y="48.1" width="3.9" height="3.6" fill="#3d64c0"/>
<rect x="44.7" y="48.1" width="3.9" height="3.6" fill="#ffffff"/>
<rect x="52.3" y="48.1" width="4" height="3.6" fill="#f07b55"/>
<path d="M6.9 58.2 H17.1 L16.1 64 H7.8 Z" fill="url(#rc7)"/>
<path d="M46.5 58.2 H56.8 L55.8 64 H47.3 Z" fill="url(#rc7)"/>
</svg></div>
<div class="cbtns"><div class="cbtn" style="color:#0047eb">查看详情</div><div class="cbtn" style="color:#67c23a">设备授权</div><div class="cbtn" style="color:#303133">查看设备</div></div>
</div><div class="card" style="left:300px;top:974px">
<div class="ctitle"><span class="cicon bars"><svg width="18" height="14" viewBox="0 0 18 14"><rect x="0" y="0" width="17.6" height="5.2" rx="1.3" fill="#2d2d2f"/><rect x="0" y="8.8" width="17.6" height="5.2" rx="1.3" fill="#2d2d2f"/><rect x="2.7" y="2.3" width="3.5" height="0.9" fill="#bbb"/><rect x="2.7" y="11.1" width="3.5" height="0.9" fill="#bbb"/></svg></span><span class="tname">x</span><span class="ctag">admin</span></div>
<div class="status"><span class="dot" style="background:#a6a9ad"></span><span class="stt" style="color:#909399">未发布</span></div>
<div class="lab" style="top:81px">所属分类:</div><div class="cat" style="top:83px">78</div>
<div class="lab" style="top:119px">产品类型:</div><div class="val" style="top:119px;left:103px">直连设备</div>
<div class="lab" style="top:153px">联网方式:</div><div class="val" style="top:153px;left:103px">WIFI</div>
<div class="lab" style="top:186px">设备授权:</div><div class="tag2">未启用</div>
<div class="cimg"><svg width="64" height="64" viewBox="0 0 64 64"><defs>
<linearGradient id="ra8" x1="0" y1="0" x2="0" y2="1"><stop offset="0" stop-color="#84b5ff"/><stop offset="1" stop-color="#dde9ff"/></linearGradient>
<linearGradient id="rb8" x1="0" y1="0" x2="0" y2="1"><stop offset="0" stop-color="#86b6ff"/><stop offset="1" stop-color="#deebff"/></linearGradient>
<linearGradient id="rc8" x1="0" y1="0" x2="0" y2="1"><stop offset="0" stop-color="#0047eb"/><stop offset="1" stop-color="#2f78f7"/></linearGradient>
</defs>
<rect x="4.4" y="0" width="6.9" height="33" fill="url(#ra8)"/><rect x="52.2" y="0" width="7.1" height="33" fill="url(#ra8)"/>
<path d="M17.38 15.74 A19.3 19.3 0 0 1 46.52 15.74 L43.50 18.36 A15.3 15.3 0 0 0 20.40 18.36 ZM22.91 20.82 A11.8 11.8 0 0 1 40.99 20.82 L37.93 23.39 A7.8 7.8 0 0 0 25.97 23.39 ZM28.58 25.57 A4.4 4.4 0 0 1 35.32 25.57 L31.95 28.40 Z" fill="#0047eb"/>
<rect x="0" y="34" width="63.5" height="23.3" fill="url(#rb8)"/>
<path d="M7.8 34 H55.7 L54.3 42.1 H9.3 Z" fill="url(#rc8)"/>
<rect x="7.3" y="48.1" width="11.6" height="3.6" fill="#3d64c0"/>
<rect x="37.3" y="48.1" width="3.9" height="3.6" fill="#3d64c0"/>
<rect x="44.7" y="48.1" width="3.9" height="3.6" fill="#ffffff"/>
<rect x="52.3" y="48.1" width="4" height="3.6" fill="#f07b55"/>
<path d="M6.9 58.2 H17.1 L16.1 64 H7.8 Z" fill="url(#rc8)"/>
<path d="M46.5 58.2 H56.8 L55.8 64 H47.3 Z" fill="url(#rc8)"/>
</svg></div>
<div class="cbtns"><div class="cbtn" style="color:#0047eb">查看详情</div><div class="cbtn" style="color:#f56c6c;width:69px">删除</div><div class="cbtn" style="color:#303133">查看设备</div></div>
</div><div class="card" style="left:862px;top:974px">
<div class="ctitle"><span class="cicon bars"><svg width="18" height="14" viewBox="0 0 18 14"><rect x="0" y="0" width="17.6" height="5.2" rx="1.3" fill="#2d2d2f"/><rect x="0" y="8.8" width="17.6" height="5.2" rx="1.3" fill="#2d2d2f"/><rect x="2.7" y="2.3" width="3.5" height="0.9" fill="#bbb"/><rect x="2.7" y="11.1" width="3.5" height="0.9" fill="#bbb"/></svg></span><span class="tname">电表<span style="letter-spacing:.35px">99</span></span><span class="ctag">admin</span></div>
<div class="status"><span class="dot" style="background:#67c23a"></span><span class="stt" style="color:#67c23a">已发布</span></div>
<div class="lab" style="top:81px">所属分类:</div><div class="cat" style="top:83px">测试</div>
<div class="lab" style="top:119px">产品类型:</div><div class="val" style="top:119px;left:103px">网关设备</div>
<div class="lab" style="top:153px">联网方式:</div><div class="val" style="top:153px;left:103px">WIFI</div>
<div class="lab" style="top:186px">设备授权:</div><div class="tag2">未启用</div>
<div class="cimg"><svg width="64" height="64" viewBox="0 0 64 64"><defs>
<linearGradient id="cg9" gradientUnits="userSpaceOnUse" x1="0" y1="0" x2="0" y2="45"><stop offset="0" stop-color="#7cb0ff"/><stop offset="1" stop-color="#dbe9fe"/></linearGradient>
<linearGradient id="og9" x1="0" y1="0" x2="0" y2="1"><stop offset="0" stop-color="#ea5455"/><stop offset="1" stop-color="#f5a466"/></linearGradient>
<linearGradient id="bg9" x1="0" y1="0" x2="0" y2="1"><stop offset="0" stop-color="#0047eb"/><stop offset="1" stop-color="#3d88ff"/></linearGradient>
<linearGradient id="lg9" gradientUnits="userSpaceOnUse" x1="0" y1="45" x2="0" y2="60"><stop offset="0" stop-color="#8ab8ff"/><stop offset="1" stop-color="#e4efff"/></linearGradient>
<linearGradient id="dg9" gradientUnits="userSpaceOnUse" x1="0" y1="45" x2="0" y2="54"><stop offset="0" stop-color="#5f86d6"/><stop offset="1" stop-color="#2f5fc4"/></linearGradient>
</defs>
<g fill="url(#cg9)"><circle cx="28" cy="20.9" r="20.6"/><circle cx="48" cy="21" r="8.8"/><circle cx="13.3" cy="31.5" r="13"/><circle cx="50.2" cy="31.5" r="13"/><rect x="13.3" y="20" width="37" height="24.5"/></g>
<path d="M14.44 28.53 A20.7 20.7 0 0 1 49.16 28.53 L46.06 30.54 A17 17 0 0 0 17.54 30.54 ZM20.56 32.50 A13.4 13.4 0 0 1 43.04 32.50 L39.85 34.57 A9.6 9.6 0 0 0 23.75 34.57 ZM27.21 36.59 A5.6 5.6 0 0 1 36.39 36.59 L33.27 38.77 A1.8 1.8 0 0 0 30.33 38.77 Z" fill="#0047eb"/>
<path d="M18.5 45 H22.2 V59.7 H14.5 V56.6 H18.5 Z" fill="url(#lg9)"/>
<path d="M41.4 45 H44.5 V56.6 H49 V59.7 H41.4 Z" fill="url(#lg9)"/>
<rect x="30.1" y="45" width="3.2" height="9" fill="url(#dg9)"/>
<circle cx="9.45" cy="58.3" r="5.5" fill="url(#og9)"/><circle cx="54.2" cy="58.3" r="5.5" fill="url(#og9)"/>
<circle cx="31.8" cy="58.3" r="5.4" fill="url(#bg9)"/>
</svg></div>
<div class="cbtns"><div class="cbtn" style="color:#0047eb">查看详情</div><div class="cbtn" style="color:#67c23a">设备授权</div><div class="cbtn" style="color:#303133">查看设备</div></div>
</div><div class="card" style="left:1424px;top:974px">
<div class="ctitle"><span class="cicon bars"><svg width="18" height="14" viewBox="0 0 18 14"><rect x="0" y="0" width="17.6" height="5.2" rx="1.3" fill="#2d2d2f"/><rect x="0" y="8.8" width="17.6" height="5.2" rx="1.3" fill="#2d2d2f"/><rect x="2.7" y="2.3" width="3.5" height="0.9" fill="#bbb"/><rect x="2.7" y="11.1" width="3.5" height="0.9" fill="#bbb"/></svg></span><span class="tname">电表<span style="letter-spacing:.35px">21</span></span><span class="ctag">admin</span></div>
<div class="status"><span class="dot" style="background:#67c23a"></span><span class="stt" style="color:#67c23a">已发布</span></div>
<div class="lab" style="top:81px">所属分类:</div><div class="cat" style="top:83px">测试</div>
<div class="lab" style="top:119px">产品类型:</div><div class="val" style="top:119px;left:103px">网关设备</div>
<div class="lab" style="top:153px">联网方式:</div><div class="val" style="top:153px;left:103px">WIFI</div>
<div class="lab" style="top:186px">设备授权:</div><div class="tag2">未启用</div>
<div class="cimg"><svg width="64" height="64" viewBox="0 0 64 64"><defs>
<linearGradient id="cg10" gradientUnits="userSpaceOnUse" x1="0" y1="0" x2="0" y2="45"><stop offset="0" stop-color="#7cb0ff"/><stop offset="1" stop-color="#dbe9fe"/></linearGradient>
<linearGradient id="og10" x1="0" y1="0" x2="0" y2="1"><stop offset="0" stop-color="#ea5455"/><stop offset="1" stop-color="#f5a466"/></linearGradient>
<linearGradient id="bg10" x1="0" y1="0" x2="0" y2="1"><stop offset="0" stop-color="#0047eb"/><stop offset="1" stop-color="#3d88ff"/></linearGradient>
<linearGradient id="lg10" gradientUnits="userSpaceOnUse" x1="0" y1="45" x2="0" y2="60"><stop offset="0" stop-color="#8ab8ff"/><stop offset="1" stop-color="#e4efff"/></linearGradient>
<linearGradient id="dg10" gradientUnits="userSpaceOnUse" x1="0" y1="45" x2="0" y2="54"><stop offset="0" stop-color="#5f86d6"/><stop offset="1" stop-color="#2f5fc4"/></linearGradient>
</defs>
<g fill="url(#cg10)"><circle cx="28" cy="20.9" r="20.6"/><circle cx="48" cy="21" r="8.8"/><circle cx="13.3" cy="31.5" r="13"/><circle cx="50.2" cy="31.5" r="13"/><rect x="13.3" y="20" width="37" height="24.5"/></g>
<path d="M14.44 28.53 A20.7 20.7 0 0 1 49.16 28.53 L46.06 30.54 A17 17 0 0 0 17.54 30.54 ZM20.56 32.50 A13.4 13.4 0 0 1 43.04 32.50 L39.85 34.57 A9.6 9.6 0 0 0 23.75 34.57 ZM27.21 36.59 A5.6 5.6 0 0 1 36.39 36.59 L33.27 38.77 A1.8 1.8 0 0 0 30.33 38.77 Z" fill="#0047eb"/>
<path d="M18.5 45 H22.2 V59.7 H14.5 V56.6 H18.5 Z" fill="url(#lg10)"/>
<path d="M41.4 45 H44.5 V56.6 H49 V59.7 H41.4 Z" fill="url(#lg10)"/>
<rect x="30.1" y="45" width="3.2" height="9" fill="url(#dg10)"/>
<circle cx="9.45" cy="58.3" r="5.5" fill="url(#og10)"/><circle cx="54.2" cy="58.3" r="5.5" fill="url(#og10)"/>
<circle cx="31.8" cy="58.3" r="5.4" fill="url(#bg10)"/>
</svg></div>
<div class="cbtns"><div class="cbtn" style="color:#0047eb">查看详情</div><div class="cbtn" style="color:#67c23a">设备授权</div><div class="cbtn" style="color:#303133">查看设备</div></div>
</div><div class="card" style="left:1986px;top:974px">
<div class="ctitle"><span class="cicon share"><svg width="23" height="23" viewBox="0 0 23 23"><rect x="5.5" y="0.5" width="17" height="19" rx="2.5" fill="#67c23a"/><rect x="4" y="2.5" width="16.5" height="19" rx="2.5" fill="#e9effb"/><rect x="0.5" y="3.2" width="18.7" height="19.3" rx="2.5" fill="#67c23a"/>
<g fill="none" stroke="#fff" stroke-width="1.2"><circle cx="12.7" cy="8.2" r="1.9"/><circle cx="6.3" cy="12.2" r="1.9"/><circle cx="12.7" cy="16.6" r="1.9"/><path d="M11.1 9.2 L7.9 11.2 M7.9 13.2 L11.1 15.6"/></g></svg></span><span class="tname">hujjj</span><span class="ctag">lisi</span></div>
<div class="status"><span class="dot" style="background:#a6a9ad"></span><span class="stt" style="color:#909399">未发布</span></div>
<div class="lab" style="top:81px">所属分类:</div><div class="cat" style="top:83px">我的测试产品</div>
<div class="lab" style="top:119px">产品类型:</div><div class="val" style="top:119px;left:103px">直连设备</div>
<div class="lab" style="top:153px">联网方式:</div><div class="val" style="top:153px;left:103px">其他</div>
<div class="lab" style="top:186px">设备授权:</div><div class="tag2">未启用</div>
<div class="cimg"><svg width="64" height="64" viewBox="0 0 64 64"><defs>
<linearGradient id="ra11" x1="0" y1="0" x2="0" y2="1"><stop offset="0" stop-color="#84b5ff"/><stop offset="1" stop-color="#dde9ff"/></linearGradient>
<linearGradient id="rb11" x1="0" y1="0" x2="0" y2="1"><stop offset="0" stop-color="#86b6ff"/><stop offset="1" stop-color="#deebff"/></linearGradient>
<linearGradient id="rc11" x1="0" y1="0" x2="0" y2="1"><stop offset="0" stop-color="#0047eb"/><stop offset="1" stop-color="#2f78f7"/></linearGradient>
</defs>
<rect x="4.4" y="0" width="6.9" height="33" fill="url(#ra11)"/><rect x="52.2" y="0" width="7.1" height="33" fill="url(#ra11)"/>
<path d="M17.38 15.74 A19.3 19.3 0 0 1 46.52 15.74 L43.50 18.36 A15.3 15.3 0 0 0 20.40 18.36 ZM22.91 20.82 A11.8 11.8 0 0 1 40.99 20.82 L37.93 23.39 A7.8 7.8 0 0 0 25.97 23.39 ZM28.58 25.57 A4.4 4.4 0 0 1 35.32 25.57 L31.95 28.40 Z" fill="#0047eb"/>
<rect x="0" y="34" width="63.5" height="23.3" fill="url(#rb11)"/>
<path d="M7.8 34 H55.7 L54.3 42.1 H9.3 Z" fill="url(#rc11)"/>
<rect x="7.3" y="48.1" width="11.6" height="3.6" fill="#3d64c0"/>
<rect x="37.3" y="48.1" width="3.9" height="3.6" fill="#3d64c0"/>
<rect x="44.7" y="48.1" width="3.9" height="3.6" fill="#ffffff"/>
<rect x="52.3" y="48.1" width="4" height="3.6" fill="#f07b55"/>
<path d="M6.9 58.2 H17.1 L16.1 64 H7.8 Z" fill="url(#rc11)"/>
<path d="M46.5 58.2 H56.8 L55.8 64 H47.3 Z" fill="url(#rc11)"/>
</svg></div>
<div class="cbtns"><div class="cbtn" style="color:#0047eb">查看详情</div><div class="cbtn" style="color:#303133">查看设备</div></div>
</div>
<div style="position:absolute;left:2541px;top:1px;width:19px;height:1271px;z-index:30;background:linear-gradient(90deg,rgba(0,0,0,0),rgba(0,0,0,.012) 70%,rgba(0,0,0,.03))"></div>
</body></html>
